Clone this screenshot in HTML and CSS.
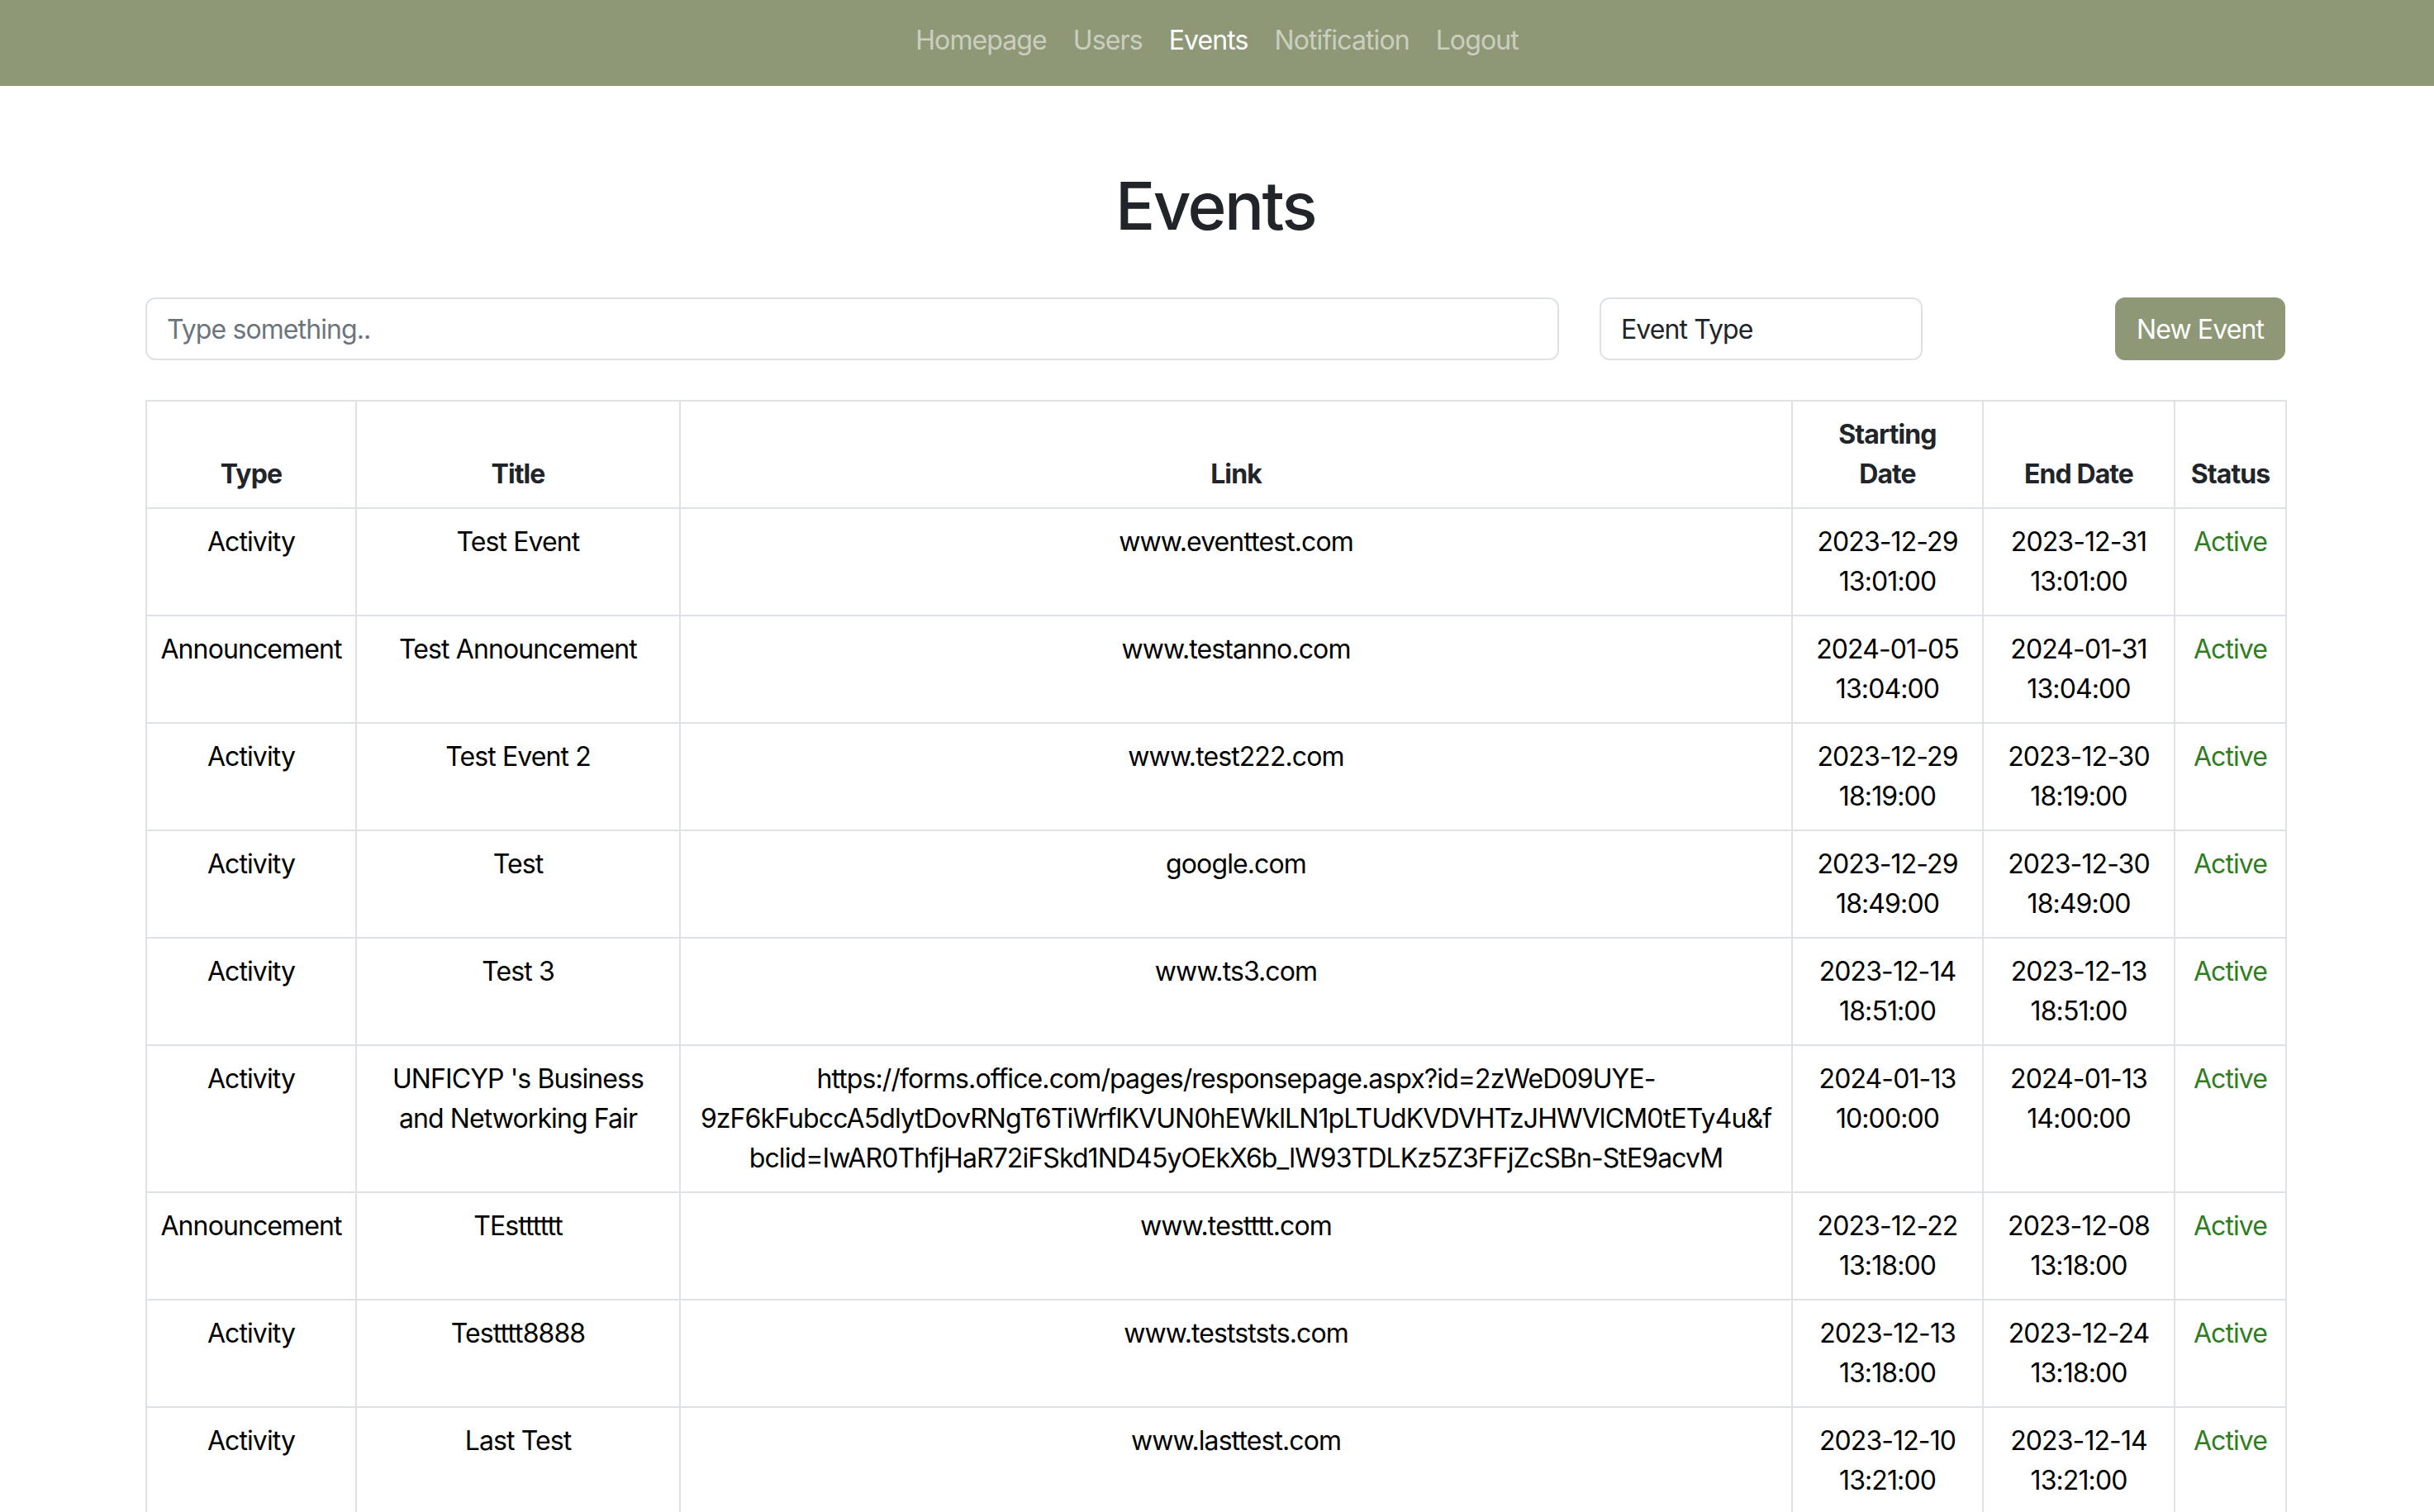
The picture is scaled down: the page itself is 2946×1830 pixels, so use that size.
FILE: index.html
```html
<!DOCTYPE html>
<html lang="en">
<head>
<meta charset="utf-8">
<title>Events</title>
<link rel="stylesheet" href="styles.css">
</head>
<body>
<nav class="navbar">
  <a class="nav-link" href="#">Homepage</a>
  <a class="nav-link" href="#">Users</a>
  <a class="nav-link active" href="#">Events</a>
  <a class="nav-link" href="#">Notification</a>
  <a class="nav-link" href="#">Logout</a>
</nav>
<main class="container">
  <h1 class="page-title">Events</h1>
  <div class="toolbar">
    <input class="form-control" type="text" placeholder="Type something..">
    <select class="form-control form-select"><option>Event Type</option></select>
    <button class="btn-new">New Event</button>
  </div>
  <table class="events-table">
    <colgroup>
      <col class="c-type"><col class="c-title"><col class="c-link"><col class="c-start"><col class="c-end"><col class="c-status">
    </colgroup>
    <thead>
      <tr><th>Type</th><th>Title</th><th>Link</th><th>Starting<br>Date</th><th>End Date</th><th>Status</th></tr>
    </thead>
    <tbody>
      <tr><td>Activity</td><td>Test Event</td><td>www.eventtest.com</td><td>2023-12-29 13:01:00</td><td>2023-12-31 13:01:00</td><td class="status">Active</td></tr>
      <tr><td>Announcement</td><td>Test Announcement</td><td>www.testanno.com</td><td>2024-01-05 13:04:00</td><td>2024-01-31 13:04:00</td><td class="status">Active</td></tr>
      <tr><td>Activity</td><td>Test Event 2</td><td>www.test222.com</td><td>2023-12-29 18:19:00</td><td>2023-12-30 18:19:00</td><td class="status">Active</td></tr>
      <tr><td>Activity</td><td>Test</td><td>google.com</td><td>2023-12-29 18:49:00</td><td>2023-12-30 18:49:00</td><td class="status">Active</td></tr>
      <tr><td>Activity</td><td>Test 3</td><td>www.ts3.com</td><td>2023-12-14 18:51:00</td><td>2023-12-13 18:51:00</td><td class="status">Active</td></tr>
      <tr><td>Activity</td><td>UNFICYP 's Business<br>and Networking Fair</td><td class="long">https://forms.office.com/pages/responsepage.aspx?id=2zWeD09UYE-<br>9zF6kFubccA5dlytDovRNgT6TiWrflKVUN0hEWklLN1pLTUdKVDVHTzJHWVlCM0tETy4u&amp;f<br>bclid=IwAR0ThfjHaR72iFSkd1ND45yOEkX6b_lW93TDLKz5Z3FFjZcSBn-StE9acvM</td><td>2024-01-13 10:00:00</td><td>2024-01-13 14:00:00</td><td class="status">Active</td></tr>
      <tr><td>Announcement</td><td>TEstttttt</td><td>www.testttt.com</td><td>2023-12-22 13:18:00</td><td>2023-12-08 13:18:00</td><td class="status">Active</td></tr>
      <tr><td>Activity</td><td>Testttt8888</td><td>www.testststs.com</td><td>2023-12-13 13:18:00</td><td>2023-12-24 13:18:00</td><td class="status">Active</td></tr>
      <tr><td>Activity</td><td>Last Test</td><td>www.lasttest.com</td><td>2023-12-10 13:21:00</td><td>2023-12-14 13:21:00</td><td class="status">Active</td></tr>
    </tbody>
  </table>
</main>
</body>
</html>
```
FILE: styles.css
```css
* { box-sizing: border-box; }
html, body { margin: 0; padding: 0; }
body {
  font-family: Inter, "Liberation Sans", sans-serif;
  font-size: 32px;
  line-height: 1.5;
  letter-spacing: -0.9px;
  color: #212529;
  background: #fff;
}
.navbar {
  height: 104px;
  background: #8e9876;
  display: flex;
  justify-content: center;
  align-items: flex-start;
  padding-top: 25px;
}
.nav-link {
  color: rgba(255,255,255,0.55);
  text-decoration: none;
  padding: 0 16px;
  line-height: 48px;
}
.nav-link.active { color: #fff; }
.container {
  width: 2590px;
  margin: 0 0 0 176px;
}
.page-title {
  margin: 97px 0 0;
  text-align: center;
  font-size: 80px;
  font-weight: 500;
  line-height: 1.2;
  letter-spacing: -2.6px;
  color: #212529;
}
.toolbar {
  margin-top: 63px;
  display: grid;
  grid-template-columns: 1711px 391px 1fr;
  column-gap: 49px;
  align-items: center;
}
.form-control {
  height: 76px;
  border: 2px solid #dee2e6;
  border-radius: 12px;
  padding: 0 24px;
  font-family: inherit;
  font-size: 32px;
  letter-spacing: -0.9px;
  color: #212529;
  background: #fff;
  outline: none;
}
.form-control::placeholder { color: #6c757d; }
.form-select { appearance: none; -webkit-appearance: none; }
.btn-new {
  justify-self: end;
  height: 76px;
  padding: 0 24px;
  border: 2px solid #8e9876;
  border-radius: 12px;
  background: #8e9876;
  color: #fff;
  font-family: inherit;
  font-size: 32px;
  letter-spacing: -0.9px;
}
.events-table {
  margin-top: 48px;
  width: 2590px;
  table-layout: fixed;
  border-collapse: collapse;
}
.c-type { width: 254px; }
.c-title { width: 392px; }
.c-link { width: 1346px; }
.c-start { width: 231px; }
.c-end { width: 232px; }
.c-status { width: 135px; }
.events-table th, .events-table td {
  border: 2px solid #dee2e6;
  padding: 16px;
  text-align: center;
}
.events-table th {
  vertical-align: bottom;
  font-weight: 700;
  color: #212529;
}
.events-table td {
  vertical-align: top;
  color: #000;
}
.events-table td.long { overflow-wrap: anywhere; }
.events-table td.status { color: #2f7d1f; }
```
